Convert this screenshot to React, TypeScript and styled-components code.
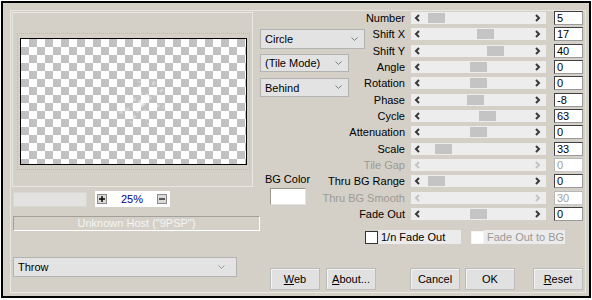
import React from "react";
import styled, { createGlobalStyle } from "styled-components";

const GlobalStyle = createGlobalStyle`
  html, body { margin: 0; padding: 0; background: #fff; }
  body { font-family: "Liberation Sans", Arial, sans-serif; font-size: 11px; color: #000; }
  * { box-sizing: border-box; }
`;

const Window = styled.div`
  margin: 1px 0 0 1px;
  width: 590px;
  height: 297px;
  border: 2px solid #000;
  background: #d4d0c8;
  padding: 7px 3px 3px 7px;
  display: flex;
`;

const Frame = styled.div`
  flex: 1;
  border: 1px solid #e9e7e2;
  padding: 0 0 0 1px;
  display: flex;
`;

const LeftCol = styled.div`
  width: 244px;
  padding-top: 1px;
  display: flex;
  flex-direction: column;
  align-items: flex-start;
`;

const PreviewGroup = styled.div`
  width: 241px;
  height: 175px;
  border: 1px solid #e9e7e2;
  padding: 20px 0 0 4px;
`;

const PreviewFrame = styled.div`
  width: 233px;
  height: 137px;
  border: 1px dotted #bdbab3;
  padding: 4px 2px;
`;

const Checker = styled.div`
  position: relative;
  width: 227px;
  height: 127px;
  border: 1px solid #000;
  background-color: #fff;
  background-image: conic-gradient(#c1c1c1 25%, #fff 0 50%, #c1c1c1 0 75%, #fff 0);
  background-size: 16px 16px;
`;

const Burst = styled.svg`
  position: absolute;
  left: 0;
  top: 0;
`;

const ZoomRow = styled.div`
  margin: 4px 0 0 1px;
  display: flex;
  align-items: center;
  gap: 8px;
  height: 16px;
`;

const ZoomBar = styled.div`
  width: 74px;
  height: 15px;
  background: #e3e2e0;
  border: 1px solid #d9d7d2;
`;

const ZoomBox = styled.div`
  width: 75px;
  height: 16px;
  background: #fff;
  display: flex;
  align-items: center;
  padding: 0 3px 0 2px;
`;

const ZoomBtn = styled.div`
  width: 10px;
  height: 10px;
  border: 1px solid #8a8a8a;
  background: #dcdad6;
  display: flex;
  align-items: center;
  justify-content: center;
`;

const ZoomText = styled.div`
  flex: 1;
  text-align: center;
  color: #000080;
  font-size: 11px;
  line-height: 14px;
`;

const HostBar = styled.div`
  margin: 9px 0 0 1px;
  width: 247px;
  height: 15px;
  border-top: 1px solid #a3a099;
  border-left: 1px solid #a3a099;
  border-bottom: 1px solid #fff;
  border-right: 1px solid #fff;
  color: #f4f4f4;
  text-align: center;
  line-height: 13px;
  font-size: 11px;
`;

const Select = styled.div<{ $w: number; $h: number; $mt?: number }>`
  width: ${(p) => p.$w}px;
  height: ${(p) => p.$h}px;
  margin-top: ${(p) => p.$mt ?? 0}px;
  background: #e3e3e3;
  border: 1px solid #b3b3b3;
  display: flex;
  align-items: center;
  justify-content: space-between;
  padding: 0 6px 0 4px;
  font-size: 11px;
  flex-shrink: 0;
`;

const ThrowSelect = styled(Select)`
  margin: 26px 0 0 1px;
  padding: 0 11px 0 4px;
`;

const RightCol = styled.div`
  flex: 1;
  display: flex;
  flex-direction: column;
`;

const Stack = styled.div`
  display: grid;
  & > * {
    grid-area: 1 / 1;
  }
`;

const MidColumn = styled.div`
  justify-self: start;
  padding: 18px 0 0 4px;
  display: flex;
  flex-direction: column;
  align-items: flex-start;
`;

const BgGroup = styled.div`
  margin: 75px 0 0 3px;
  width: 49px;
  display: flex;
  flex-direction: column;
  align-items: center;
`;

const BgLabel = styled.div`
  line-height: 14px;
  white-space: nowrap;
`;

const Swatch = styled.div`
  margin-top: 2px;
  width: 36px;
  height: 17px;
  background: #fff;
  border-top: 1px solid #9a978f;
  border-left: 1px solid #9a978f;
  border-right: 1px solid #e6e4e0;
  border-bottom: 1px solid #e6e4e0;
`;

const SliderGrid = styled.div`
  justify-self: end;
  margin: -1px 2px 0 0;
  display: grid;
  grid-template-columns: max-content 135px 37px;
  grid-auto-rows: 16.33px;
  align-items: center;
`;

const Label = styled.div<{ $disabled?: boolean }>`
  text-align: right;
  padding-right: 6px;
  white-space: nowrap;
  color: ${(p) => (p.$disabled ? "#9c9a96" : "#000")};
`;

const Track = styled.div`
  position: relative;
  height: 12px;
  background: #ededed;
  display: flex;
  align-items: center;
  justify-content: space-between;
  padding: 0 5px 0 3px;
`;

const Thumb = styled.div`
  position: absolute;
  top: 1px;
  width: 17px;
  height: 10px;
  background: #c4c4c4;
`;

const ValueBox = styled.div<{ $disabled?: boolean }>`
  justify-self: end;
  width: 29px;
  height: 14px;
  background: #fff;
  border-top: 1px solid ${(p) => (p.$disabled ? "#b8b8b8" : "#404040")};
  border-left: 1px solid ${(p) => (p.$disabled ? "#b8b8b8" : "#404040")};
  border-right: 1px solid ${(p) => (p.$disabled ? "#c8c8c8" : "#9a9a9a")};
  border-bottom: 1px solid ${(p) => (p.$disabled ? "#c8c8c8" : "#9a9a9a")};
  padding-left: 2px;
  line-height: 12px;
  color: ${(p) => (p.$disabled ? "#a0a0a0" : "#000")};
`;

const CheckRow = styled.div`
  margin-top: 8px;
  padding-left: 109px;
  display: flex;
  align-items: center;
  gap: 10px;
  height: 14px;
`;

const CheckItem = styled.div`
  display: flex;
  align-items: center;
`;

const CheckBox = styled.div<{ $disabled?: boolean }>`
  width: 13px;
  height: 13px;
  background: #fff;
  border: 1px solid ${(p) => (p.$disabled ? "#f4f4f4" : "#333")};
`;

const CheckLabel = styled.div<{ $w: number; $disabled?: boolean }>`
  width: ${(p) => p.$w}px;
  height: 14px;
  background: #ebebeb;
  padding-left: 3px;
  line-height: 14px;
  white-space: nowrap;
  color: ${(p) => (p.$disabled ? "#9c9a96" : "#000")};
`;

const ButtonRow = styled.div`
  margin-top: 24px;
  padding-left: 14px;
  display: flex;
`;

const Button = styled.div<{ $gap?: number }>`
  margin-left: ${(p) => p.$gap ?? 0}px;
  width: 50px;
  height: 22px;
  background: #e1e1e1;
  border: 1px solid #bcbcbc;
  box-shadow: inset 1px 1px 0 #f3f3f3;
  display: flex;
  align-items: center;
  justify-content: center;
  font-size: 11px;
`;

const Chevron = ({ color = "#7d7d7d" }: { color?: string }) => (
  <svg width="7" height="5" viewBox="0 0 7 5">
    <polyline points="0.5,0.5 3.5,3.5 6.5,0.5" fill="none" stroke={color} strokeWidth="1" />
  </svg>
);

const Arrow = ({ dir, disabled }: { dir: "l" | "r"; disabled?: boolean }) => (
  <svg width="6" height="8" viewBox="0 0 6 8">
    <polyline
      points={dir === "l" ? "5,1 2,4 5,7" : "1,1 4,4 1,7"}
      fill="none"
      stroke={disabled ? "#c4c4c4" : "#3a3a3a"}
      strokeWidth="2"
    />
  </svg>
);

type Row = { label: string; value: string; pos?: number; disabled?: boolean };

const rows: Row[] = [
  { label: "Number", value: "5", pos: 17 },
  { label: "Shift X", value: "17", pos: 66 },
  { label: "Shift Y", value: "40", pos: 76 },
  { label: "Angle", value: "0", pos: 59 },
  { label: "Rotation", value: "0", pos: 59 },
  { label: "Phase", value: "-8", pos: 56 },
  { label: "Cycle", value: "63", pos: 68 },
  { label: "Attenuation", value: "0", pos: 59 },
  { label: "Scale", value: "33", pos: 24 },
  { label: "Tile Gap", value: "0", disabled: true },
  { label: "Thru BG Range", value: "0", pos: 17 },
  { label: "Thru BG Smooth", value: "30", disabled: true },
  { label: "Fade Out", value: "0", pos: 59 },
];

export default function App() {
  return (
    <>
      <GlobalStyle />
      <Window>
        <Frame>
          <LeftCol>
            <PreviewGroup>
              <PreviewFrame>
                <Checker>
                  <Burst width="225" height="125" viewBox="0 0 225 125">
                    <g stroke="#ffffff" strokeOpacity="0.35" strokeWidth="3" fill="none" strokeDasharray="4 3">
                      <line x1="121" y1="64" x2="134" y2="42" />
                      <line x1="121" y1="64" x2="143" y2="50" />
                      <line x1="121" y1="64" x2="143" y2="68" />
                      <line x1="121" y1="64" x2="128" y2="86" />
                      <line x1="121" y1="64" x2="110" y2="84" />
                      <line x1="121" y1="64" x2="98" y2="74" />
                      <line x1="121" y1="64" x2="118" y2="42" />
                      <line x1="121" y1="64" x2="104" y2="56" />
                    </g>
                  </Burst>
                </Checker>
              </PreviewFrame>
            </PreviewGroup>
            <ZoomRow>
              <ZoomBar />
              <ZoomBox>
                <ZoomBtn>
                  <svg width="6" height="6" viewBox="0 0 6 6">
                    <path d="M0 3H6M3 0V6" stroke="#000" strokeWidth="1.4" />
                  </svg>
                </ZoomBtn>
                <ZoomText>25%</ZoomText>
                <ZoomBtn>
                  <svg width="6" height="6" viewBox="0 0 6 6">
                    <path d="M0 3H6" stroke="#000" strokeWidth="1.2" />
                  </svg>
                </ZoomBtn>
              </ZoomBox>
            </ZoomRow>
            <HostBar>Unknown Host ("9PSP")</HostBar>
            <ThrowSelect $w={224} $h={20}>
              <span>Throw</span>
              <Chevron color="#9a9a9a" />
            </ThrowSelect>
          </LeftCol>
          <RightCol>
            <Stack>
              <MidColumn>
                <Select $w={105} $h={20}>
                  <span>Circle</span>
                  <Chevron />
                </Select>
                <Select $w={89} $h={18} $mt={5}>
                  <span>(Tile Mode)</span>
                  <Chevron />
                </Select>
                <Select $w={89} $h={19} $mt={6}>
                  <span>Behind</span>
                  <Chevron />
                </Select>
                <BgGroup>
                  <BgLabel>BG Color</BgLabel>
                  <Swatch />
                </BgGroup>
              </MidColumn>
              <SliderGrid>
                {rows.map((r) => (
                  <React.Fragment key={r.label}>
                    <Label $disabled={r.disabled}>{r.label}</Label>
                    <Track>
                      <Arrow dir="l" disabled={r.disabled} />
                      {r.pos !== undefined && <Thumb style={{ left: r.pos }} />}
                      <Arrow dir="r" disabled={r.disabled} />
                    </Track>
                    <ValueBox $disabled={r.disabled}>{r.value}</ValueBox>
                  </React.Fragment>
                ))}
              </SliderGrid>
            </Stack>
            <CheckRow>
              <CheckItem>
                <CheckBox />
                <CheckLabel $w={83}>1/n Fade Out</CheckLabel>
              </CheckItem>
              <CheckItem>
                <CheckBox $disabled />
                <CheckLabel $w={81} $disabled>
                  Fade Out to BG
                </CheckLabel>
              </CheckItem>
            </CheckRow>
            <ButtonRow>
              <Button>
                <span>
                  <u>W</u>eb
                </span>
              </Button>
              <Button $gap={6}>
                <span>
                  <u>A</u>bout...
                </span>
              </Button>
              <Button $gap={34}>Cancel</Button>
              <Button $gap={5}>OK</Button>
              <Button $gap={18}>
                <span>
                  <u>R</u>eset
                </span>
              </Button>
            </ButtonRow>
          </RightCol>
        </Frame>
      </Window>
    </>
  );
}
